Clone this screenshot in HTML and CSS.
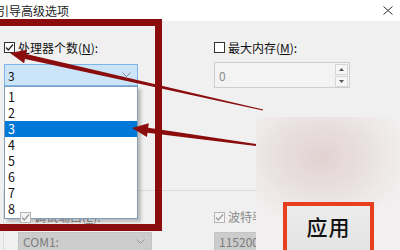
FILE: index.html
```html
<!DOCTYPE html>
<html lang="zh-CN">
<head>
<meta charset="utf-8">
<title>引导高级选项</title>
<link rel="stylesheet" href="styles.css">
</head>
<body>
<div class="titlebar">
  <span class="title">引导高级选项</span>
  <svg class="close" width="10" height="9" viewBox="0 0 10 9"><path d="M0.5 0.5L9.5 8.5M9.5 0.5L0.5 8.5" stroke="#333" stroke-width="1" fill="none"/></svg>
</div>
<div class="main">
  <div class="col left">
    <div class="field">
      <span class="cb checked"><svg width="11" height="11" viewBox="0 0 11 11"><path d="M2 5.5L4.3 8L9 2.5" stroke="#222" stroke-width="1.2" fill="none"/></svg></span>
      <span class="lbl">处理器个数(<u>N</u>):</span>
    </div>
    <div class="combo active">
      <span class="val">3</span>
      <svg class="chev" width="9" height="6" viewBox="0 0 9 6"><path d="M0.5 0.5L4.5 4.5L8.5 0.5" stroke="#8a8a8a" fill="none"/></svg>
      <ul class="list">
        <li>1</li>
        <li>2</li>
        <li class="sel">3</li>
        <li>4</li>
        <li>5</li>
        <li>6</li>
        <li>7</li>
        <li>8</li>
      </ul>
    </div>
  </div>
  <div class="col right">
    <div class="field">
      <span class="cb"></span>
      <span class="lbl">最大内存(<u>M</u>):</span>
    </div>
    <div class="spinner">
      <span class="val">0</span>
      <div class="spin">
        <span class="sbtn"><svg width="5" height="3" viewBox="0 0 5 3"><path d="M0 3L2.5 0L5 3Z" fill="#555"/></svg></span>
        <span class="sbtn"><svg width="5" height="3" viewBox="0 0 5 3"><path d="M0 0L2.5 3L5 0Z" fill="#555"/></svg></span>
      </div>
    </div>
  </div>
</div>
<div class="lower">
  <div class="col lleft">
    <div class="field dis shift">
      <span class="cb checked"><svg width="11" height="11" viewBox="0 0 11 11"><path d="M2 5.5L4.3 8L9 2.5" stroke="#999" stroke-width="1.2" fill="none"/></svg></span>
      <span class="lbl">调试端口(<u>E</u>):</span>
    </div>
    <div class="combo dcombo">
      <span class="val">COM1:</span>
      <svg class="chev" width="9" height="6" viewBox="0 0 9 6"><path d="M0.5 0.5L4.5 4.5L8.5 0.5" stroke="#9a9a9a" fill="none"/></svg>
    </div>
  </div>
  <div class="col lright">
    <div class="field dis">
      <span class="cb checked"><svg width="11" height="11" viewBox="0 0 11 11"><path d="M2 5.5L4.3 8L9 2.5" stroke="#999" stroke-width="1.2" fill="none"/></svg></span>
      <span class="lbl">波特率(<u>B</u>):</span>
    </div>
    <div class="combo dcombo">
      <span class="val">115200</span>
    </div>
  </div>
</div>

<div class="frame"></div>
<svg class="arrows" width="400" height="250" viewBox="0 0 400 250">
  <polygon fill="#8a0c0c" points="10,53 27.1,49.7 26.15,54.06 263.13,109.41 262.87,110.59 25.05,58.94 24.1,63.3"/>
  <polygon fill="#8a0c0c" points="132,128 148.8,123.2 148.19,127.69 256.14,144.01 255.86,145.99 147.51,132.65 146.9,137.1"/>
</svg>
<div class="patch">
  <div class="apply"><span>应用</span></div>
</div>
</body>
</html>
```
FILE: styles.css
```css
* { box-sizing: border-box; }
html, body { margin: 0; padding: 0; }
body {
  width: 400px;
  height: 250px;
  overflow: hidden;
  position: relative;
  background: #f0f0f0;
  font-family: "Noto Sans CJK SC", "Noto Sans", sans-serif;
  font-size: 12px;
  color: #111;
}
.titlebar {
  height: 21px;
  background: #fff;
  display: flex;
  align-items: center;
  justify-content: space-between;
}
.title {
  margin-left: -3px;
  font-size: 12px;
  color: #222;
  line-height: 1;
}
.close { margin-right: 7px; display: block; }

.main {
  height: 169px;
  display: flex;
  gap: 76px;
  padding: 20px 0 0 4px;
}
.col { display: flex; flex-direction: column; }
.left { width: 134px; }
.right { width: 136px; }

.field {
  height: 13px;
  display: flex;
  align-items: center;
  gap: 3px;
  line-height: 1;
}
.lbl { color: #111; font-size: 12px; }
.lbl u { text-decoration-thickness: 1px; text-underline-offset: 1px; }
.cb {
  width: 11px;
  height: 11px;
  border: 1px solid #333;
  background: #fff;
  position: relative;
  flex: none;
}
.cb svg { position: absolute; left: -1px; top: -1px; }

.combo {
  margin-top: 10px;
  height: 22px;
  border: 1px solid #7eb4ea;
  background: #cce4f7;
  position: relative;
  display: flex;
  align-items: center;
  justify-content: space-between;
  padding: 0 6px 0 3px;
  font-size: 12px;
}
.chev { display: block; }
.list {
  position: absolute;
  left: -1px;
  top: 21px;
  width: 134px;
  margin: 0;
  padding: 2px 0 1px;
  list-style: none;
  background: #fff;
  border: 1px solid #7f9db9;
  box-shadow: 3px 3px 3px rgba(0,0,0,0.22);
}
.list li {
  height: 16px;
  line-height: 16px;
  padding-left: 3px;
  font-size: 12.5px;
  color: #111;
}
.list li.sel { background: #0078d7; color: #fff; }

.spinner {
  margin-top: 8px;
  height: 26px;
  border: 1px solid #cfcfcf;
  background: #f3f3f3;
  display: flex;
  align-items: center;
  justify-content: space-between;
  padding: 0 1px 0 4px;
}
.spinner .val { color: #8c8c8c; }
.spin { display: flex; flex-direction: column; gap: 1px; }
.sbtn {
  width: 13px;
  height: 11px;
  border: 1px solid #d6d6d6;
  background: #f6f6f6;
  display: flex;
  align-items: center;
  justify-content: center;
}
.sbtn svg { display: block; }

.lower {
  margin-left: 3px;
  border-top: 1px solid #dcdcdc;
  border-left: 1px solid #dcdcdc;
  height: 60px;
  display: flex;
  gap: 62px;
  padding: 20px 0 0 14px;
}
.lleft { width: 134px; }
.lright { width: 136px; }
.field.dis .lbl { color: #8a8a8a; }
.field.dis .cb { border-color: #b5b5b5; background: #f4f4f4; }
.shift { margin-left: 2px; }
.dcombo {
  margin-top: 9px;
  background: #cccccc;
  border-color: #c4c4c4;
  padding: 0 6px 0 4px;
}
.dcombo .val { color: #7c7c7c; }

.frame {
  position: absolute;
  left: -20px;
  top: 19px;
  width: 182px;
  height: 212px;
  border: 7px solid #8a0c0c;
}
.arrows { position: absolute; left: 0; top: 0; }
.patch {
  position: absolute;
  left: 256px;
  top: 117px;
  width: 144px;
  height: 133px;
  background: radial-gradient(ellipse 90px 70px at 45% 30%, #e2d2d2 0%, #e8dede 45%, #efeaea 80%, #f1efef 100%);
}
.apply {
  position: absolute;
  left: 27px;
  top: 85px;
  width: 91px;
  height: 60px;
  border: 4px solid #e8401f;
  background: linear-gradient(#ececec, #e2e2e2);
  display: flex;
  justify-content: center;
  padding-top: 7px;
}
.apply span {
  font-size: 21px;
  line-height: 26px;
  color: #111;
  font-weight: 500;
  letter-spacing: 1px;
}
```
